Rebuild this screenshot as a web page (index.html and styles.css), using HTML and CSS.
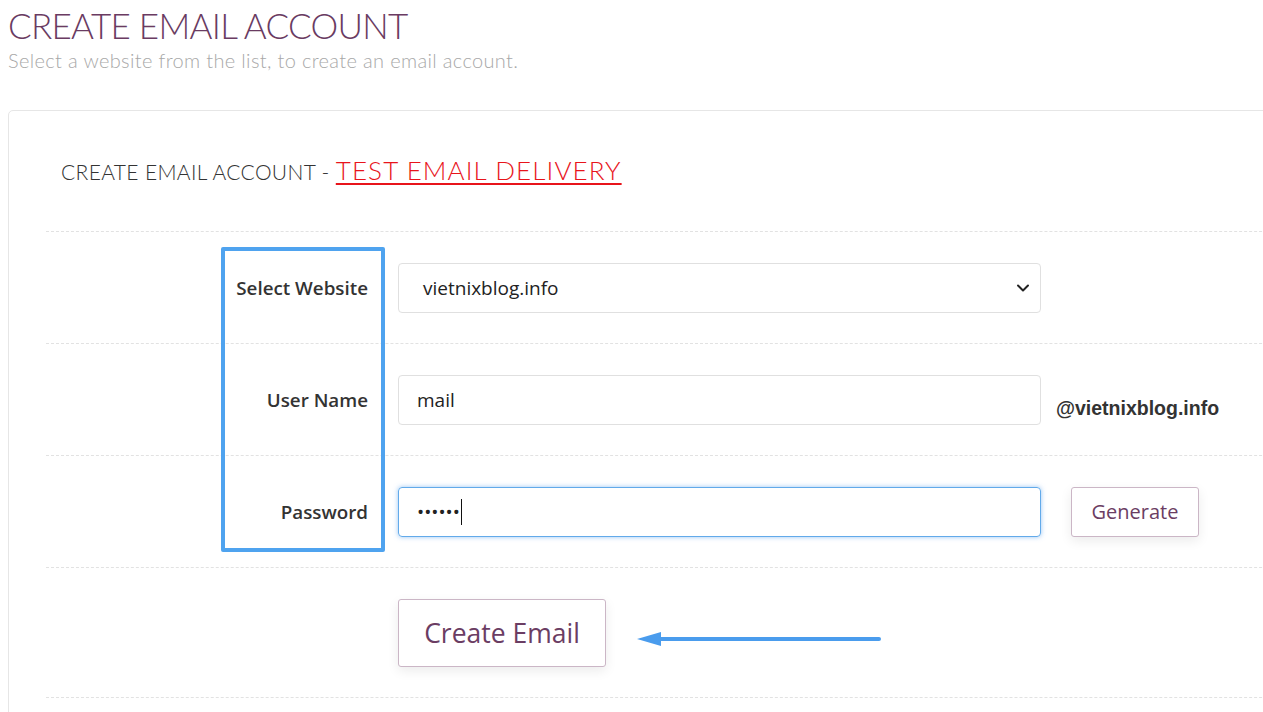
FILE: index.html
```html
<!DOCTYPE html>
<html>
<head>
<meta charset="utf-8">
<link rel="stylesheet" href="styles.css">
</head>
<body>
<div class="page">
  <h1 class="title">CREATE EMAIL ACCOUNT</h1>
  <p class="subtitle">Select a website from the list, to create an email account.</p>
  <div class="card">
    <div class="card-head">CREATE EMAIL ACCOUNT - <a class="link" href="#">TEST EMAIL DELIVERY</a></div>
    <div class="row">
      <div class="label">Select Website</div>
      <div class="field select"><span>vietnixblog.info</span>
        <svg width="14" height="10" viewBox="0 0 14 10"><path d="M2 2.5 L7 7.5 L12 2.5" fill="none" stroke="#222" stroke-width="2" stroke-linecap="round" stroke-linejoin="round"/></svg>
      </div>
    </div>
    <div class="row">
      <div class="label">User Name</div>
      <div class="field">mail</div>
      <div class="addon">@vietnixblog.info</div>
    </div>
    <div class="row">
      <div class="label">Password</div>
      <div class="field focus"><span class="dots">••••••</span><span class="caret"></span></div>
      <button class="btn gen">Generate</button>
    </div>
    <div class="row submit">
      <div class="label"></div>
      <button class="btn big">Create Email</button>
    </div>
    <div class="row last"></div>
  </div>
</div>
<div class="highlight"></div>
<svg class="arrow" width="250" height="20" viewBox="0 0 250 20">
  <line x1="20" y1="10" x2="242" y2="10" stroke="#4a9ced" stroke-width="4" stroke-linecap="round"/>
  <path d="M0 10 L24 3 L24 17 Z" fill="#4a9ced"/>
</svg>
</body>
</html>
```
FILE: styles.css
```css
html, body { margin: 0; padding: 0; background: #fff; overflow: hidden; }
body { width: 1263px; height: 712px; position: relative; }
.page { padding-left: 8px; }
.title {
  font-family: "Lato", sans-serif; font-weight: 300; font-size: 35px;
  color: #6a3b62; margin: 0; padding-top: 6px; line-height: 38px; letter-spacing: -0.7px;
}
.subtitle {
  font-family: "Lato", sans-serif; font-weight: 300; font-size: 20px;
  color: #a8a8a8; margin: 4px 0 0 0; line-height: 24px; letter-spacing: 0.35px;
}
.card {
  margin-top: 38px; width: 1320px; border: 1px solid #e6e6e6; border-radius: 5px;
  padding-left: 37px; box-sizing: border-box; background: #fff;
}
.card-head {
  font-family: "Lato", sans-serif; font-weight: 300; font-size: 21px; color: #333;
  padding: 44px 0 0 15px; height: 76px; line-height: 30px; letter-spacing: 0.35px;
}
.link { color: #e8141b; font-size: 26px; letter-spacing: 1.1px; text-decoration: underline; text-decoration-thickness: 2px; text-underline-offset: 3px; }
.row {
  border-top: 1px dashed #e2e2e2; height: 111px; display: flex; align-items: center;
}
.row.submit { height: 129px; }
.row.last { height: 20px; }
.label {
  width: 322px; padding-right: 30px; text-align: right; flex: none;
  font-family: "Open Sans", sans-serif; font-weight: 600; font-size: 18.8px; color: #333;
}
.field {
  width: 643px; height: 50px; box-sizing: border-box; border: 1px solid #e0e0e0; border-radius: 4px;
  font-family: "Open Sans", sans-serif; font-size: 19px; color: #222;
  display: flex; align-items: center; padding-left: 18px; flex: none;
}
.select { padding-left: 24px; padding-right: 10px; justify-content: space-between; }
.focus { border-color: #62aaea; box-shadow: 0 0 5px rgba(70,150,235,.55); }
.dots { font-size: 19px; letter-spacing: 0; }
.caret { width: 1px; height: 26px; background: #111; margin-left: 1px; }
.addon {
  margin-left: 15px; margin-top: 18px;
  font-family: "Liberation Sans", sans-serif; font-weight: 700; font-size: 19.5px; color: #333;
}
.btn {
  font-family: "Open Sans", sans-serif; color: #6b3d63; background: #fff;
  border: 1px solid #cbb6c6; border-radius: 3px; box-shadow: 0 4px 12px rgba(0,0,0,.08); padding: 0;
}
.gen { margin-left: 30px; width: 128px; height: 50px; font-size: 20px; }
.big { width: 208px; height: 68px; font-size: 26.5px; }
.highlight {
  position: absolute; left: 221px; top: 247px; width: 164px; height: 305px; box-sizing: border-box;
  border: 4px solid #4fa3ef; border-radius: 2px;
}
.arrow { position: absolute; left: 637px; top: 629px; }
```
